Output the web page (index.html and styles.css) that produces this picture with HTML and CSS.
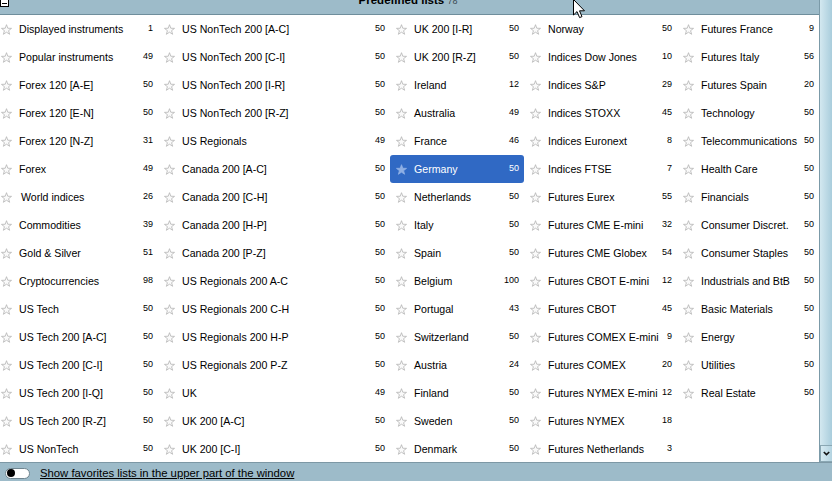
FILE: index.html
```html
<!DOCTYPE html>
<html>
<head>
<meta charset="utf-8">
<link rel="stylesheet" href="styles.css">
</head>
<body>
<svg class="defs" width="0" height="0">
  <symbol id="star" viewBox="0 0 11 11">
    <polygon points="5.5,0.7 6.79,4.22 10.54,4.36 7.59,6.68 8.62,10.29 5.5,8.2 2.38,10.29 3.41,6.68 0.46,4.36 4.21,4.22"/>
  </symbol>
</svg>
<div class="window">
  <div class="main">
    <div class="header">
      <span class="collapse"><span class="minus"></span></span>
      <div class="title"><b>Predefined lists</b> <span class="total">78</span></div>
    </div>
    <div class="lists">
      <div class="grid">
        <div class="item"><svg class="star"><use href="#star"/></svg><span class="name">Displayed instruments</span><span class="count">1</span></div>
        <div class="item"><svg class="star"><use href="#star"/></svg><span class="name">Popular instruments</span><span class="count">49</span></div>
        <div class="item"><svg class="star"><use href="#star"/></svg><span class="name">Forex 120 [A-E]</span><span class="count">50</span></div>
        <div class="item"><svg class="star"><use href="#star"/></svg><span class="name">Forex 120 [E-N]</span><span class="count">50</span></div>
        <div class="item"><svg class="star"><use href="#star"/></svg><span class="name">Forex 120 [N-Z]</span><span class="count">31</span></div>
        <div class="item"><svg class="star"><use href="#star"/></svg><span class="name">Forex</span><span class="count">49</span></div>
        <div class="item"><svg class="star"><use href="#star"/></svg><span class="name indent">World indices</span><span class="count">26</span></div>
        <div class="item"><svg class="star"><use href="#star"/></svg><span class="name">Commodities</span><span class="count">39</span></div>
        <div class="item"><svg class="star"><use href="#star"/></svg><span class="name">Gold &amp; Silver</span><span class="count">51</span></div>
        <div class="item"><svg class="star"><use href="#star"/></svg><span class="name">Cryptocurrencies</span><span class="count">98</span></div>
        <div class="item"><svg class="star"><use href="#star"/></svg><span class="name">US Tech</span><span class="count">50</span></div>
        <div class="item"><svg class="star"><use href="#star"/></svg><span class="name">US Tech 200 [A-C]</span><span class="count">50</span></div>
        <div class="item"><svg class="star"><use href="#star"/></svg><span class="name">US Tech 200 [C-I]</span><span class="count">50</span></div>
        <div class="item"><svg class="star"><use href="#star"/></svg><span class="name">US Tech 200 [I-Q]</span><span class="count">50</span></div>
        <div class="item"><svg class="star"><use href="#star"/></svg><span class="name">US Tech 200 [R-Z]</span><span class="count">50</span></div>
        <div class="item"><svg class="star"><use href="#star"/></svg><span class="name">US NonTech</span><span class="count">50</span></div>

        <div class="item"><svg class="star"><use href="#star"/></svg><span class="name">US NonTech 200 [A-C]</span><span class="count">50</span></div>
        <div class="item"><svg class="star"><use href="#star"/></svg><span class="name">US NonTech 200 [C-I]</span><span class="count">50</span></div>
        <div class="item"><svg class="star"><use href="#star"/></svg><span class="name">US NonTech 200 [I-R]</span><span class="count">50</span></div>
        <div class="item"><svg class="star"><use href="#star"/></svg><span class="name">US NonTech 200 [R-Z]</span><span class="count">50</span></div>
        <div class="item"><svg class="star"><use href="#star"/></svg><span class="name">US Regionals</span><span class="count">49</span></div>
        <div class="item"><svg class="star"><use href="#star"/></svg><span class="name">Canada 200 [A-C]</span><span class="count">50</span></div>
        <div class="item"><svg class="star"><use href="#star"/></svg><span class="name">Canada 200 [C-H]</span><span class="count">50</span></div>
        <div class="item"><svg class="star"><use href="#star"/></svg><span class="name">Canada 200 [H-P]</span><span class="count">50</span></div>
        <div class="item"><svg class="star"><use href="#star"/></svg><span class="name">Canada 200 [P-Z]</span><span class="count">50</span></div>
        <div class="item"><svg class="star"><use href="#star"/></svg><span class="name">US Regionals 200 A-C</span><span class="count">50</span></div>
        <div class="item"><svg class="star"><use href="#star"/></svg><span class="name">US Regionals 200 C-H</span><span class="count">50</span></div>
        <div class="item"><svg class="star"><use href="#star"/></svg><span class="name">US Regionals 200 H-P</span><span class="count">50</span></div>
        <div class="item"><svg class="star"><use href="#star"/></svg><span class="name">US Regionals 200 P-Z</span><span class="count">50</span></div>
        <div class="item"><svg class="star"><use href="#star"/></svg><span class="name">UK</span><span class="count">49</span></div>
        <div class="item"><svg class="star"><use href="#star"/></svg><span class="name">UK 200 [A-C]</span><span class="count">50</span></div>
        <div class="item"><svg class="star"><use href="#star"/></svg><span class="name">UK 200 [C-I]</span><span class="count">50</span></div>

        <div class="item"><svg class="star"><use href="#star"/></svg><span class="name">UK 200 [I-R]</span><span class="count">50</span></div>
        <div class="item"><svg class="star"><use href="#star"/></svg><span class="name">UK 200 [R-Z]</span><span class="count">50</span></div>
        <div class="item"><svg class="star"><use href="#star"/></svg><span class="name">Ireland</span><span class="count">12</span></div>
        <div class="item"><svg class="star"><use href="#star"/></svg><span class="name">Australia</span><span class="count">49</span></div>
        <div class="item"><svg class="star"><use href="#star"/></svg><span class="name">France</span><span class="count">46</span></div>
        <div class="item selected"><svg class="star"><use href="#star"/></svg><span class="name">Germany</span><span class="count">50</span></div>
        <div class="item"><svg class="star"><use href="#star"/></svg><span class="name">Netherlands</span><span class="count">50</span></div>
        <div class="item"><svg class="star"><use href="#star"/></svg><span class="name">Italy</span><span class="count">50</span></div>
        <div class="item"><svg class="star"><use href="#star"/></svg><span class="name">Spain</span><span class="count">50</span></div>
        <div class="item"><svg class="star"><use href="#star"/></svg><span class="name">Belgium</span><span class="count">100</span></div>
        <div class="item"><svg class="star"><use href="#star"/></svg><span class="name">Portugal</span><span class="count">43</span></div>
        <div class="item"><svg class="star"><use href="#star"/></svg><span class="name">Switzerland</span><span class="count">50</span></div>
        <div class="item"><svg class="star"><use href="#star"/></svg><span class="name">Austria</span><span class="count">24</span></div>
        <div class="item"><svg class="star"><use href="#star"/></svg><span class="name">Finland</span><span class="count">50</span></div>
        <div class="item"><svg class="star"><use href="#star"/></svg><span class="name">Sweden</span><span class="count">50</span></div>
        <div class="item"><svg class="star"><use href="#star"/></svg><span class="name">Denmark</span><span class="count">50</span></div>

        <div class="item"><svg class="star"><use href="#star"/></svg><span class="name">Norway</span><span class="count">50</span></div>
        <div class="item"><svg class="star"><use href="#star"/></svg><span class="name">Indices Dow Jones</span><span class="count">10</span></div>
        <div class="item"><svg class="star"><use href="#star"/></svg><span class="name">Indices S&amp;P</span><span class="count">29</span></div>
        <div class="item"><svg class="star"><use href="#star"/></svg><span class="name">Indices STOXX</span><span class="count">45</span></div>
        <div class="item"><svg class="star"><use href="#star"/></svg><span class="name">Indices Euronext</span><span class="count">8</span></div>
        <div class="item"><svg class="star"><use href="#star"/></svg><span class="name">Indices FTSE</span><span class="count">7</span></div>
        <div class="item"><svg class="star"><use href="#star"/></svg><span class="name">Futures Eurex</span><span class="count">55</span></div>
        <div class="item"><svg class="star"><use href="#star"/></svg><span class="name">Futures CME E-mini</span><span class="count">32</span></div>
        <div class="item"><svg class="star"><use href="#star"/></svg><span class="name">Futures CME Globex</span><span class="count">54</span></div>
        <div class="item"><svg class="star"><use href="#star"/></svg><span class="name">Futures CBOT E-mini</span><span class="count">12</span></div>
        <div class="item"><svg class="star"><use href="#star"/></svg><span class="name">Futures CBOT</span><span class="count">45</span></div>
        <div class="item"><svg class="star"><use href="#star"/></svg><span class="name">Futures COMEX E-mini</span><span class="count">9</span></div>
        <div class="item"><svg class="star"><use href="#star"/></svg><span class="name">Futures COMEX</span><span class="count">20</span></div>
        <div class="item"><svg class="star"><use href="#star"/></svg><span class="name">Futures NYMEX E-mini</span><span class="count">12</span></div>
        <div class="item"><svg class="star"><use href="#star"/></svg><span class="name">Futures NYMEX</span><span class="count">18</span></div>
        <div class="item"><svg class="star"><use href="#star"/></svg><span class="name">Futures Netherlands</span><span class="count">3</span></div>

        <div class="item"><svg class="star"><use href="#star"/></svg><span class="name">Futures France</span><span class="count">9</span></div>
        <div class="item"><svg class="star"><use href="#star"/></svg><span class="name">Futures Italy</span><span class="count">56</span></div>
        <div class="item"><svg class="star"><use href="#star"/></svg><span class="name">Futures Spain</span><span class="count">20</span></div>
        <div class="item"><svg class="star"><use href="#star"/></svg><span class="name">Technology</span><span class="count">50</span></div>
        <div class="item"><svg class="star"><use href="#star"/></svg><span class="name">Telecommunications</span><span class="count">50</span></div>
        <div class="item"><svg class="star"><use href="#star"/></svg><span class="name">Health Care</span><span class="count">50</span></div>
        <div class="item"><svg class="star"><use href="#star"/></svg><span class="name">Financials</span><span class="count">50</span></div>
        <div class="item"><svg class="star"><use href="#star"/></svg><span class="name">Consumer Discret.</span><span class="count">50</span></div>
        <div class="item"><svg class="star"><use href="#star"/></svg><span class="name">Consumer Staples</span><span class="count">50</span></div>
        <div class="item"><svg class="star"><use href="#star"/></svg><span class="name">Industrials and BtB</span><span class="count">50</span></div>
        <div class="item"><svg class="star"><use href="#star"/></svg><span class="name">Basic Materials</span><span class="count">50</span></div>
        <div class="item"><svg class="star"><use href="#star"/></svg><span class="name">Energy</span><span class="count">50</span></div>
        <div class="item"><svg class="star"><use href="#star"/></svg><span class="name">Utilities</span><span class="count">50</span></div>
        <div class="item"><svg class="star"><use href="#star"/></svg><span class="name">Real Estate</span><span class="count">50</span></div>
      </div>
    </div>
  </div>
  <div class="scrollbar">
    <div class="track"></div>
    <div class="arrow-btn">
      <svg width="7" height="5" viewBox="0 0 7 5"><polyline points="0.8,1 3.5,3.6 6.2,1" fill="none" stroke="#111" stroke-width="1.6"/></svg>
    </div>
  </div>
  <div class="footer">
    <span class="toggle"><span class="knob"></span></span>
    <span class="fav-link">Show favorites lists in the upper part of the window</span>
  </div>
</div>
<svg class="cursor" width="13" height="20" viewBox="0 0 13 20">
  <path d="M0.5,0.5 L0.5,16 L4,12.6 L6.6,18.6 L9,17.6 L6.5,11.8 L11.5,11.8 Z" fill="#fff" stroke="#000" stroke-width="1" stroke-linejoin="miter"/>
</svg>
</body>
</html>
```
FILE: styles.css
```css
html, body {
  margin: 0;
  padding: 0;
  width: 832px;
  height: 481px;
  overflow: hidden;
  background: #9dbbc9;
  font-family: "Liberation Sans", Arial, sans-serif;
  color: #000;
}

.defs {
  position: absolute;
  width: 0;
  height: 0;
}

.window {
  display: grid;
  grid-template-columns: 819px 13px;
  grid-template-rows: 462px 19px;
  width: 832px;
  height: 481px;
}

.main {
  display: flex;
  flex-direction: column;
  overflow: hidden;
  background: #fff;
}

.header {
  height: 14px;
  border-bottom: 1px solid #6f8e9c;
  background: #9dbbc9;
  display: flex;
  align-items: flex-start;
  flex: none;
  overflow: hidden;
}

.collapse {
  flex: none;
  width: 7px;
  height: 6px;
  margin-top: -1px;
  border: 1px solid #000;
  background: #fff;
  display: flex;
  align-items: center;
  justify-content: center;
}

.minus {
  display: block;
  width: 5px;
  height: 1px;
  background: #000;
  margin-top: 1px;
}

.title {
  flex: 1;
  text-align: center;
  font-size: 11.5px;
  line-height: 12px;
  margin-top: -6px;
  margin-right: 12px;
  white-space: nowrap;
}

.title b {
  font-weight: bold;
}

.total {
  font-size: 9px;
  color: #3b4a52;
}

.lists {
  flex: 1;
  overflow: hidden;
}

.grid {
  display: grid;
  grid-auto-flow: column;
  grid-template-rows: repeat(16, 28px);
  grid-template-columns: 163px 232px 134px 153px 142px;
  margin-left: -5px;
}

.item {
  display: flex;
  align-items: baseline;
  height: 28px;
  padding: 0 5px 0 6px;
  line-height: 28px;
  border-radius: 3px;
  overflow: hidden;
}

.star {
  flex: none;
  align-self: center;
  width: 11px;
  height: 11px;
  margin-right: 7px;
  margin-top: 1px;
  fill: #fafafa;
  stroke: #b4b4b4;
  stroke-width: 0.8;
}

.name {
  flex: 1;
  font-size: 10.6px;
  white-space: nowrap;
}

.name.indent {
  padding-left: 2px;
}

.count {
  flex: none;
  align-self: flex-start;
  font-size: 9px;
  line-height: 26px;
  padding-left: 3px;
}

.item.selected {
  background: #3069c4;
  color: #fff;
}

.item.selected .star {
  fill: #8fb0e4;
  stroke: #8fb0e4;
}

.scrollbar {
  display: flex;
  flex-direction: column;
  border-left: 1px solid #7b9aa8;
  background: linear-gradient(to right, #d3e8f0, #a9cddc);
}

.track {
  flex: 1;
}

.arrow-btn {
  height: 15px;
  border: 1px solid #8aa7b3;
  border-right: none;
  background: linear-gradient(to right, #d6eaf2, #b3d3e0);
  display: flex;
  align-items: center;
  justify-content: center;
}

.footer {
  grid-column: 1 / 3;
  display: flex;
  align-items: center;
  border-top: 1px solid #7d98a5;
  background: #9dbbc9;
  padding-left: 5px;
}

.toggle {
  width: 22px;
  height: 9px;
  border: 1px solid #6f8590;
  border-radius: 6px;
  background: #fff;
  display: flex;
  align-items: center;
  padding-left: 1px;
  margin-top: 2px;
}

.knob {
  width: 8px;
  height: 8px;
  border-radius: 50%;
  background: #000;
}

.fav-link {
  margin-left: 10px;
  font-size: 11.3px;
  text-decoration: underline;
  margin-top: 1px;
}

.cursor {
  position: absolute;
  left: 573px;
  top: -1px;
}
```
